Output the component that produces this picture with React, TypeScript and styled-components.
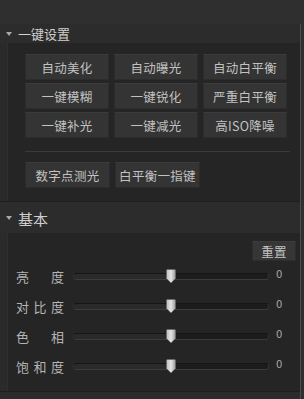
import React from "react";
import styled, { createGlobalStyle } from "styled-components";

const Global = createGlobalStyle`
  html, body { margin: 0; padding: 0; background: #2f2f2f; }
  body { font-family: "Noto Sans CJK SC", "Noto Sans", sans-serif; width: 304px; height: 399px; overflow: hidden; }
`;

const TopStrip = styled.div`
  height: 24px;
  background: #2f2f2f;
`;

const Main = styled.div`
  width: 300px;
  border-right: 1px solid #4c4c4c;
  background: #2a2a2a;
  height: 375px;
  overflow: hidden;
`;

const Header = styled.div<{ $compact?: boolean }>`
  display: flex;
  align-items: center;
  gap: 6px;
  padding-left: 6px;
  box-sizing: border-box;
  height: ${(p) => (p.$compact ? "19px" : "32px")};
  padding-top: ${(p) => (p.$compact ? "0" : "1px")};
  background: #2c2c2c;
  border-top: ${(p) => (p.$compact ? "none" : "1px solid #1e1e1e")};
  color: #cfcfcf;
  font-size: ${(p) => (p.$compact ? "13px" : "15px")};
  line-height: 17px;
`;

const Caret = styled.span`
  width: 0;
  height: 0;
  border-left: 3.5px solid transparent;
  border-right: 3.5px solid transparent;
  border-top: 4px solid #a8a8a8;
`;

const Panel = styled.div<{ $h: number }>`
  margin-left: 7px;
  height: ${(p) => p.$h}px;
  box-sizing: border-box;
  background: #252525;
  border-left: 1px solid #2f2f2f;
`;

const QuickPanelInner = styled.div`
  padding: 11px 0 0 17px;
  display: flex;
  flex-direction: column;
`;

const Grid = styled.div`
  display: grid;
  grid-template-columns: repeat(3, 84px);
  grid-auto-rows: 26px;
  column-gap: 5px;
  row-gap: 3px;
`;

const Btn = styled.div`
  display: flex;
  align-items: center;
  justify-content: center;
  box-sizing: border-box;
  background: #343434;
  border: 1px solid #2c2c2c;
  border-top-color: #3b3b3b;
  color: #c2c2c2;
  font-size: 12.5px;
  letter-spacing: 0.3px;
  white-space: nowrap;
`;

const Sep = styled.div`
  height: 1px;
  width: 265px;
  background: #3a3a3a;
  margin: 13px 0 10px 0;
`;

const Row = styled.div`
  display: flex;
  gap: 5px;
`;

const WideBtn = styled(Btn)`
  width: 85px;
  height: 26px;
`;

const BasicInner = styled.div`
  display: flex;
  flex-direction: column;
  padding-top: 8px;
`;

const ResetRow = styled.div`
  display: flex;
  justify-content: flex-end;
  padding-right: 4px;
`;

const ResetBtn = styled(Btn)`
  width: 44px;
  height: 20px;
  background: #363636;
`;

const SliderRow = styled.div`
  display: flex;
  align-items: center;
  height: 30px;
`;

const Label = styled.div`
  width: 48px;
  margin-left: 8px;
  display: flex;
  justify-content: space-between;
  color: #b4b4b4;
  font-size: 13px;
`;

const Track = styled.div`
  position: relative;
  margin-left: 9px;
  width: 196px;
  height: 7px;
  box-sizing: border-box;
  border-radius: 4px;
  background: #1c1c1c;
  border: 1px solid #333333;
  border-top-color: #151515;
  border-bottom-color: #3c3c3c;
`;

const Fill = styled.div`
  height: 100%;
  border-radius: 4px 0 0 4px;
  background: #2a2a2a;
`;

const Thumb = styled.svg`
  position: absolute;
  top: -5px;
  margin-left: -6px;
`;

const Value = styled.div`
  margin-left: 7px;
  margin-top: -3px;
  color: #a8a8a8;
  font-family: "DejaVu Sans", sans-serif;
  font-size: 10px;
`;

const Footer = styled.div`
  height: 8px;
  background: #2b2b2b;
  border-top: 1px solid #1e1e1e;
`;

const quick = [
  "自动美化", "自动曝光", "自动白平衡",
  "一键模糊", "一键锐化", "严重白平衡",
  "一键补光", "一键减光", "高ISO降噪",
];

const sliders = [
  { label: ["亮", "度"], value: 0 },
  { label: ["对", "比", "度"], value: 0 },
  { label: ["色", "相"], value: 0 },
  { label: ["饱", "和", "度"], value: 0 },
];

function Slider({ value }: { value: number }) {
  const pct = ((value + 100) / 200) * 100;
  return (
    <Track>
      <Fill style={{ width: `${pct}%` }} />
      <Thumb width="12" height="15" viewBox="0 0 12 15" style={{ left: `${pct}%` }}>
        <defs>
          <linearGradient id="tg" x1="0" x2="1" y1="0" y2="0">
            <stop offset="0" stopColor="#bdbdbd" />
            <stop offset="0.5" stopColor="#e4e4e4" />
            <stop offset="1" stopColor="#9a9a9a" />
          </linearGradient>
        </defs>
        <path d="M1.5 1.5 Q1.5 0.5 2.5 0.5 L9.5 0.5 Q10.5 0.5 10.5 1.5 L10.5 9.5 L6 14 L1.5 9.5 Z" fill="url(#tg)" stroke="#6a6a6a" strokeWidth="0.8" />
      </Thumb>
    </Track>
  );
}

export default function App() {
  return (
    <>
      <Global />
      <TopStrip />
      <Main>
        <Header $compact>
          <Caret />
          <span>一键设置</span>
        </Header>
        <Panel $h={158}>
          <QuickPanelInner>
            <Grid>
              {quick.map((q) => (
                <Btn key={q}>{q}</Btn>
              ))}
            </Grid>
            <Sep />
            <Row>
              <WideBtn>数字点测光</WideBtn>
              <WideBtn>白平衡一指键</WideBtn>
            </Row>
          </QuickPanelInner>
        </Panel>
        <Header>
          <Caret />
          <span>基本</span>
        </Header>
        <Panel $h={158}>
          <BasicInner>
            <ResetRow>
              <ResetBtn>重置</ResetBtn>
            </ResetRow>
            {sliders.map((s, i) => (
              <SliderRow key={i}>
                <Label>
                  {s.label.map((c, j) => (
                    <span key={j}>{c}</span>
                  ))}
                </Label>
                <Slider value={s.value} />
                <Value>{s.value}</Value>
              </SliderRow>
            ))}
          </BasicInner>
        </Panel>
        <Footer />
      </Main>
    </>
  );
}
